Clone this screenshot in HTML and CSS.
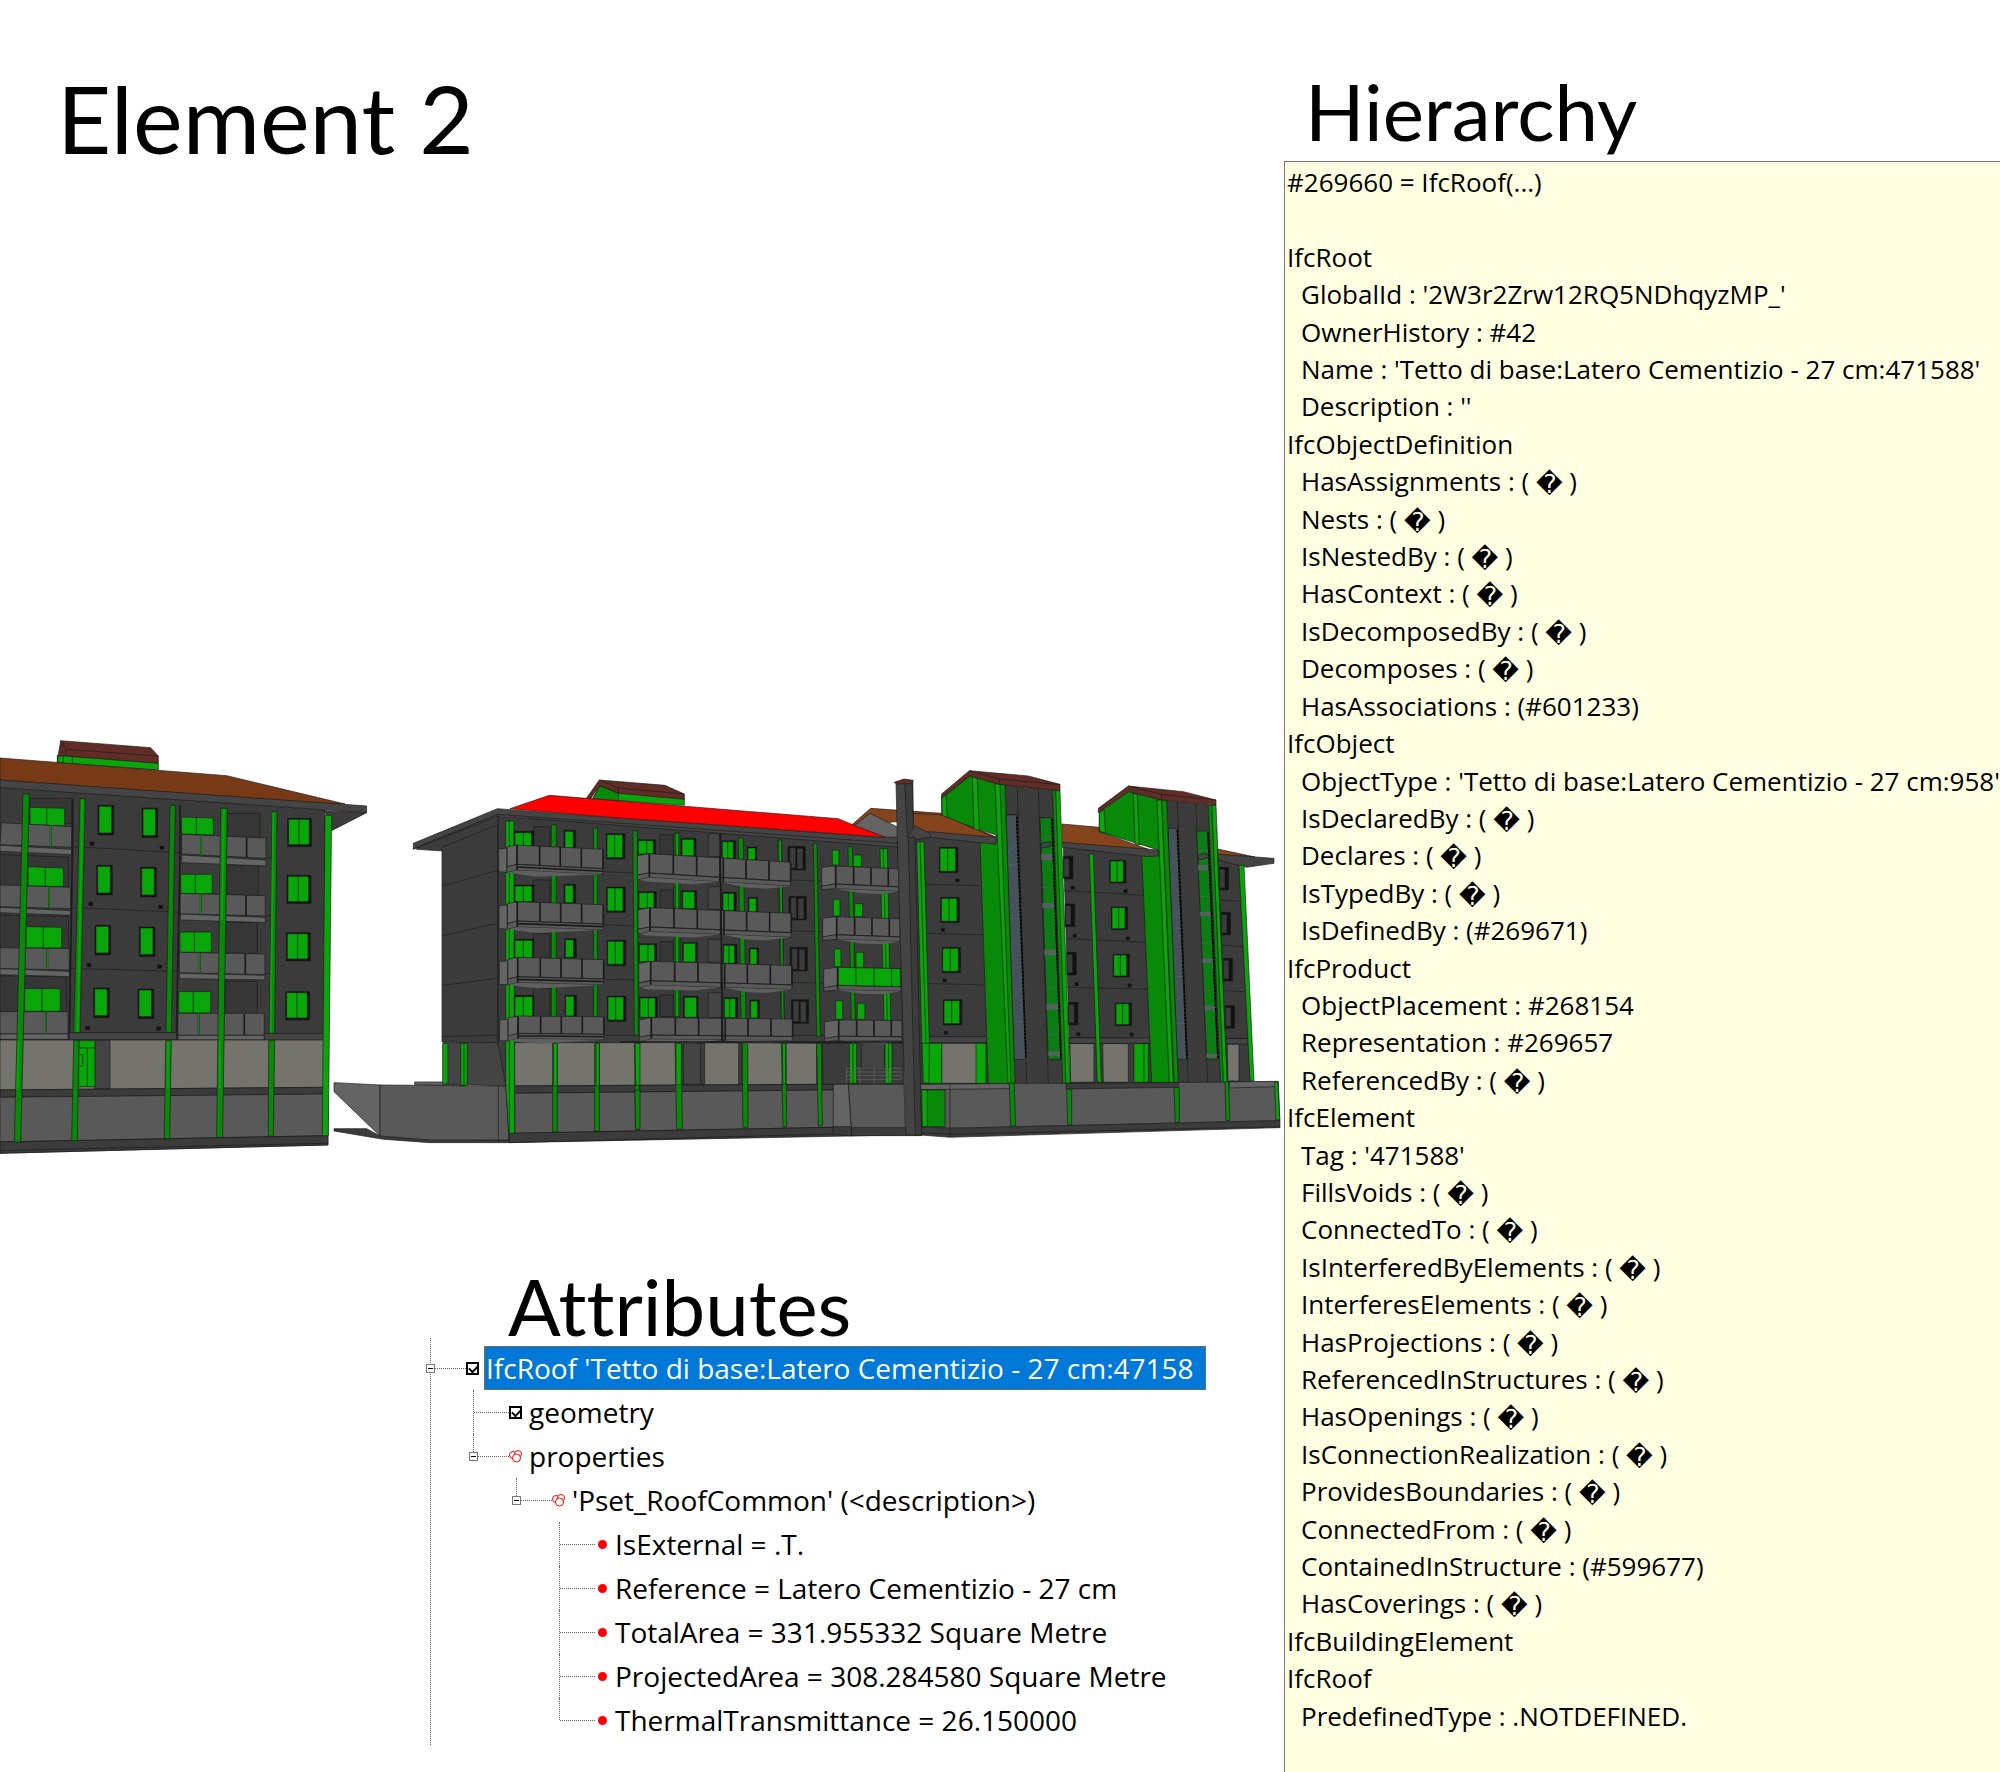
FILE: index.html
```html
<!DOCTYPE html>
<html lang="en">
<head>
<meta charset="utf-8">
<title>Element 2</title>
<link rel="stylesheet" href="styles.css">
</head>
<body>
<div class="page">
<main class="main">
<h1 class="title">Element 2</h1>
<svg class="model" viewBox="0 0 1284 450" role="img" aria-label="Building model with the selected roof in red">
<defs>
<g id="balcony-a"><path class="lite" d="M-55 14l25-3v72h-25zM-30 7L0 0V58l-30 9z"/><path class="mid" d="M0 0H258V58H0zM-30 67L0 58H258V76H0l-30 8z"/><path class="under" d="M0 76H258L60 92-30 84z"/><path class="bar" d="M0 0V76M68 0V58M130 0V58M193 0V58M258 0V58M0 66H258"/></g>
<g id="balcony-b"><path class="lite" d="M-36 8L0 0V58l-36 8z"/><path class="mid" d="M0 0H424V58H0zM-36 66L0 58H424V72H0l-36 9z"/><path class="under" d="M-30 80L0 72H210L130 84H-10zM215 72H424L350 84H290z"/><path class="bar" d="M0 0V70M72 0V58M142 0V58M212-5V72M222 0V72M290 0V58M359 0V58M424 0V58"/></g>
<g id="balcony-c"><path class="lite" d="M-42 6L0 0V54l-42 10z"/><path class="mid" d="M0 0H190V54H0zM-42 62L0 54H190V68H0l-42 5z"/><path class="under" d="M0 68H190L140 78H70z"/><path class="bar" d="M0 0V66M54 0V54M106 0V54M158 0V54"/></g>
<g id="pane"><path class="black" d="M-3-3H69V82H-3z"/><path class="g" d="M0 0H62V76H0zM31 0V76"/></g>
<g id="pane-b"><path class="black" d="M-2-3H54V73H-2z"/><path class="g" d="M0 0H47V69H0zM23 0V69"/></g>
<g id="pane-c"><path class="black" d="M-2-2H47V66H-2z"/><path class="g" d="M0 0H39V63H0zM20 0V63"/></g>
<g id="slit"><path class="black" d="M-3-3H44V86H-3z"/><path class="g" d="M0 0H38V80H0z"/></g>
<g id="blind"><path class="black" d="M-3-3H49V68H-3z"/><path class="wall" d="M2 1H20V63H2zM24 3H42V65H24z"/></g>
<g id="blind-s"><path class="black" d="M0-2H28V66H0z"/><path class="wall" d="M0 4H17V60H0z"/></g>
</defs>

<!-- left building -->
<g transform="scale(.3333)">
<path class="wall" d="M0 200L975 270 984 1275 0 1300z"/>
<path class="wall" d="M975 272L1100 278 995 332z"/>
<path class="g" d="M172 128V106L475 128V150z"/>
<path class="cap" d="M182 62L452 83 475 108V130L197 108 175 128 172 122z"/>
<path class="floor" d="M182 62L197 88 475 108M197 88V108"/>
<path class="g" d="M172 126L175 108 197 108 217 110V134zM190 106V130"/>
<path class="roof" d="M0 114L680 167 1035 252 980 252 0 180z"/>
<path class="eave" d="M0 180L1020 252 1100 258V278L0 203z"/>
<path class="floor" d="M215 380L545 398 820 414M215 563L820 588M210 745L815 762M205 938L984 942"/>
<path class="recess" d="M90 235H216V310H90zM0 403L206 412V500H0zM0 585L206 590V688H0zM0 768L200 770V876H0zM680 280H780V352H680zM680 435H775V526H680zM675 607H772V700H675zM675 784H772V882H675z"/>
<path class="g" d="M90 262L194 265V318L90 314zM84 440L190 444V500L84 498zM78 620L185 622V684H78zM74 806H181V874H74zM140 264V317M136 440V500M130 620V684M126 806V874"/>
<path class="g" d="M545 291L640 294V345L545 342zM542 463H637V521H542zM540 636H634V697H540zM536 815H632V879H536zM589 292V344M586 463V521M583 636V697M580 815V879"/>
<path class="mid" d="M4 308L215 320V382L0 374zM0 495L212 502V566L0 560zM0 683L208 686V750L0 746zM0 875H204V942H0z"/>
<path class="mid" d="M545 343L798 354V415L545 402zM541 520L796 527V588L541 582zM538 697L795 702V764L538 758zM534 880H793V946H534z"/>
<path class="lite" d="M0 376L215 388V404L0 394zM0 562L212 572V586L0 578zM0 746L208 754V770L0 764zM0 942H204V958H0zM545 405L798 420V438L545 428zM541 582L796 592V608L541 600zM538 760L795 766V780L538 776zM534 946H793V960H534z"/>
<path class="bar" d="M152 318V382M147 500V565M142 686V750M138 876V942M604 345V406M602 523V583M599 698V760M596 880V944M740 352V413M738 526V587M736 702V763M733 882V946M218 236V340L208 958M540 256V400L529 958"/>
<path class="gl" d="M152 318V382M147 500V565M142 686V750M138 876V942M604 345V406M602 523V583M599 698V760M596 880V944"/>
<use href="#slit" x="297" y="259"/><use href="#slit" x="293" y="439"/><use href="#slit" x="288" y="619"/><use href="#slit" x="284" y="807"/>
<use href="#slit" x="429" y="267"/><use href="#slit" x="425" y="445"/><use href="#slit" x="421" y="624"/><use href="#slit" x="417" y="810"/>
<use href="#pane" x="866" y="298"/><use href="#pane" x="864" y="469"/><use href="#pane" x="862" y="641"/><use href="#pane" x="860" y="818"/>
<path class="black" d="M270 366h12v10h-12zM266 547h12v10h-12zM261 730h12v10h-12zM257 919h12v10h-12zM480 378h12v10h-12zM476 556h12v10h-12zM473 735h12v10h-12zM470 921h12v10h-12z"/>
<path class="eave" d="M208 938H530V960H208zM793 940H984V962H793z"/>
<path class="garage" d="M0 960H984V1102L0 1110z"/>
<path class="eave" d="M284 962H330V1106H284z"/>
<path class="g" d="M236 962H285V1100H236zM262 984V1100M236 984H285M238 1004h10v34h-10"/>
<path class="wall" d="M0 1110L972 1102V1124L0 1132z"/>
<path class="mid" d="M0 1132L984 1122V1247L0 1266z"/>
<path class="wall" d="M0 1266L984 1247V1275L0 1300zM0 1292L984 1270"/>
<path class="gd" d="M69 222H88L62 1266H43zM240 236H256L240 938H221zM221 962H237L232 1262H215zM510 256H526L514 938H498zM497 962H514L509 1256H493zM662 265H682L668 1252H650zM817 275H831L824 940H808zM806 962H824L820 1248H805z"/>
<path class="gl2" d="M247 238L233 936M820 278L812 938M505 964L503 1104M672 268L666 600M660 964V1104M56 964L52 1108"/>
<path class="g" d="M975 286H995L985 1247H967z"/>
</g>

<!-- ramp and left wing -->
<g transform="translate(320 30) scale(.3333)">
<path class="wall" d="M42 1136H140L180 1158 330 1168 568 1170V1178H330L190 1168 42 1143z"/>
<path class="lite" d="M42 998L180 1005V1158L42 1025z"/>
<path class="mid" d="M180 1005L558 1008 568 1170H330L180 1158zM535 1008V1176"/>
<path class="lite" d="M284 996H370L430 1008 284 1004z"/>
<path class="wall" d="M290 290L532 190 560 240 370 303 290 298z"/>
<path class="wall" d="M366 292L540 222V880L366 876z"/>
<path class="eave" d="M370 878H558V1008L370 1002z"/>
<path class="g" d="M368 880H384V1000L368 1004zM422 880H442V1006H422zM432 880V1006"/>
<path class="wall" d="M534 200L1750 270V1155L568 1178 558 1008 534 880z"/>
<path class="floor" d="M368 408L555 355M368 557L555 515M368 706L555 682M366 860L535 855M534 225V875M850 365L1740 404M850 525L1740 552M850 688L1740 703M534 856H1745"/>
<path class="recess" d="M640 230H690V290H640zM640 390H690V460H640zM640 550H690V625H640zM640 715H690V800H640zM1020 255H1060V320H1020zM1020 420H1060V480H1020zM1020 575H1060V640H1020zM1020 735H1060V800H1020z"/>
<path class="garage" d="M584 878H1060L1490 880V1003L584 1008z"/>
<path class="wall" d="M580 1008L1540 1003V1020L580 1030z"/>
<path class="mid" d="M584 1030L1545 1020V1132L584 1150z"/>
<path class="wall" d="M568 1150L1545 1132V1152L568 1178z"/>
<path class="gd" d="M694 225H709V800H694zM820 234H833V800H820zM698 880H712L712 1146H698zM824 880H838V1143H824zM939 242H952L955 856H943zM944 880H958V1140H946z"/>
<path class="g" d="M557 213H582L584 1150H566L557 1000zM568 213V1150M700 880H712V1008H700zM828 880H838V1008H828zM946 880H958V1006H946z"/>
<path class="black" d="M583 244H642V290H583zM583 405H642V455H583zM583 568H642V625H583zM583 736H642V800H583zM732 241H767V294H732zM732 403H767V458H732zM734 566H769V622H734zM735 736H770V798H735z"/>
<path class="g" d="M585 248H635V290H585zM585 408H636V455H585zM585 571H637V625H585zM585 740H638V800H585zM610 248V290M610 408V455M610 571V625M610 740V800M735 244H760V294H735zM735 406H760V458H735zM736 569H761V622H736zM737 739H762V798H737z"/>
<use href="#pane-b" x="861" y="254"/><use href="#pane-b" x="862" y="414"/><use href="#pane-b" x="863" y="574"/><use href="#pane-b" x="864" y="741"/>
<use href="#balcony-a" transform="matrix(1 .05 0 1 591 285)"/><use href="#balcony-a" transform="matrix(1 .035 0 1 592 455)"/><use href="#balcony-a" transform="matrix(1 .027 0 1 593 622)"/><use href="#balcony-a" transform="matrix(1 .01 0 .9 594 798)"/>
</g>

<!-- centre of the right building -->
<g transform="translate(620 30) scale(.3333)">
<path class="gd" d="M162 250H180V800H162zM355 264H370L378 810H363zM473 270H485L493 810H483zM580 280H591L601 860H590zM590 880H604L607 1128H595zM165 880H184L187 1138H170zM366 880H383L384 1132H369zM484 880H498L500 1130H489zM45 1020H60V1138H47zM684 290H697L706 810H694z"/>
<path class="g" d="M45 880H60V1006H47zM167 250H176V800H167zM476 270H484L492 810H486zM780 296H802L812 812H792zM168 880H184V1004H168zM487 880H497V1003H489z"/>
<path class="wall" d="M188 880H254V1003H188zM356 880H366V1003H356zM606 880H850V1003H610z"/>
<path class="eave" d="M265 252L304 248V320H265zM265 410H304V478H265zM265 568H304V636H265zM265 728H304V803H265zM190 880H242V1003H190zM724 880H794V955H724z"/>
<path class="black" d="M53 269H107V312H53zM55 425H109V475H55zM56 581H110V635H56zM58 741H112V802H58zM184 265H228V318H184zM186 422H230V476H186zM188 578H232V636H188zM190 739H234V802H190zM306 272H347V325H306zM308 427H349V482H308zM310 583H351V640H310zM312 743H353V803H312zM382 291H410V330H382zM385 442H413V486H385zM388 594H416V644H388zM390 750H418V804H390z"/>
<path class="g" d="M55 272H100V312H55zM57 428H102V475H57zM58 584H104V635H58zM60 744H106V802H60zM186 268H222V318H186zM188 425H224V476H188zM190 580H227V636H190zM193 742H230V802H193zM307 275H340V325H307zM309 430H342V482H309zM311 586H344V640H311zM313 746H347V803H313zM384 294H406V330H384zM387 445H409V486H387zM390 597H411V644H390zM392 753H413V804H392zM80 272V312M82 428V475M84 584V635M85 744V802M323 275V325M325 430V482M327 586V640M329 746V803"/>
<path class="g" d="M637 300H657V345H637zM640 448H660V498H640zM643 597H663V650H643zM647 752H668V808H647zM700 315H724V350H700zM704 461H728V500H704zM708 607H731V652H708zM712 760H735V808H712zM688 880H710V1000H688zM795 880H816V1000H795zM699 880V1000M806 880V1000M790 296L802 812"/>
<use href="#blind" x="507" y="292"/><use href="#blind" x="510" y="442"/><use href="#blind" x="513" y="595"/><use href="#blind" x="517" y="752"/>
<use href="#balcony-b" transform="matrix(1 .06 0 1 88 311)"/><use href="#balcony-b" transform="matrix(1 .04 0 1 90 473)"/><use href="#balcony-b" transform="matrix(1 .03 0 1 92 634)"/><use href="#balcony-b" transform="matrix(1 .01 0 .9 94 803)"/>
<use href="#balcony-c" transform="matrix(1 .045 0 1 647 348)"/><use href="#balcony-c" transform="matrix(1 .035 0 1 650 500)"/><use href="#balcony-c" transform="matrix(1 .02 0 1 653 652)"/><use href="#balcony-c" transform="matrix(1 .01 0 .9 656 810)"/>
<path class="g" d="M655 652L841 656V710L655 706zM708 653V707M762 654V708M815 655V709"/>
<path class="bar" d="M300 248L308 876M0 876H850"/>
<path class="rail" d="M680 955H845M680 966H845M680 977H845M680 988H845M680 952V1000M720 955V1000M762 955V1000M805 955V1000"/>
<path class="mid" d="M685 1003H852L857 1155 695 1157z"/><path class="lite" d="M640 1003H685L695 1157 640 1150z"/>
<path class="wall" d="M640 1130H695V1158L640 1152zM695 1133H905V1157H695z"/>
<path class="g" d="M-82 146L-60 106-5 128 193 146V166L0 152z"/>
<path class="gd" d="M-82 146L-60 108-5 130V152z"/>
<path class="cap" d="M-102 146L-62 90 135 106 193 132V148L-5 130-60 106-88 146z"/>
<path class="floor" d="M-62 90L-5 114 193 132M-5 114V130"/>
<path class="roof2" d="M695 225L752 175 965 190 1130 262 930 256 880 256 830 215z"/>
<path class="lite" d="M703 228L750 190 850 240V262H790z"/>
<path class="eave" d="M-620 280L-368 176-20 203 200 218 790 262 930 262 840 292-368 198-620 298z"/>
<path class="floor" d="M-620 296L-368 193 835 280"/>
<path class="red" d="M-330 176L-212 136 655 206 700 225 797 262 240 221-20 203z"/>
</g>

<!-- towers on the right -->
<g transform="translate(940 30) scale(.3333)">
<path class="wall" d="M-80 250L130 270 150 1005H-60z"/>
<path class="garage" d="M5 880H110V1000H5z"/>
<path class="floor" d="M-60 403L122 407M-60 550L128 554M-60 700L132 705"/>
<path class="eave" d="M-60 860H142V878H-60z"/>
<path class="gd" d="M5 140L90 78 178 103 210 1000H145L120 275 168 275V255L20 205H5z"/>
<path class="g" d="M5 140L18 132 22 207 7 203zM97 80L112 85 118 245 102 240zM108 880H138V1000H108z"/>
<path class="roof2" d="M0 194L30 205 168 264-30 250-100 240-100 190z"/>
<path class="eave" d="M-98 264L-30 245 168 262V283L-30 262-98 274z"/>
<use href="#pane-b" x="0" y="295"/><use href="#pane-b" x="4" y="445"/><use href="#pane-b" x="8" y="595"/><use href="#pane-b" x="12" y="752"/>
<path class="black" d="M47 387h10v9h-10zM4 535h10v9h-10zM9 687h10v9h-10zM13 844h10v9h-10z"/>
<path class="wall" d="M195 105L338 120 370 1000H225zM232 112L260 1000M295 116L325 1000M195 192L230 195M298 202L337 205"/>
<path class="glass" d="M198 195H230L257 928H222z"/>
<path class="gs" d="M300 203H335L362 928H325z"/>
<path class="band" d="M304 312H338V330H304zM308 460H343V474H308zM314 600H349V614H314zM320 763H355V778H320zM325 905H360V917H325zM303 266L333 262M306 412H338M312 552H345M318 714H350M322 853H356"/>
<path class="glassline" d="M202 310L228 280M206 480L232 450M212 590L240 560M216 745L244 715M204 345H236M210 505H240M214 650H245M220 815H250"/>
<path class="eave" d="M303 280L332 275V290L304 294z"/>
<path class="dash" d="M230 200L258 925M336 206L363 925"/>
<path class="g" d="M165 102H182L215 1000H204zM345 122H360L390 1000H375z"/>
<path class="gd" d="M180 102H195L225 1005H213zM338 120H347L378 1000H368z"/>
<path class="cap" d="M5 132L88 62 265 78 360 103V122L178 103 90 78 5 145z"/>
<path class="floor" d="M88 62L178 87 360 104M178 87V103"/>
<path class="roof2" d="M366 222L478 232V245L625 298 368 280z"/>
<path class="wall" d="M370 285L612 312 635 1000H392z"/>
<path class="floor" d="M372 422L612 436M378 566L617 577M384 712L624 718M388 862L630 866"/>
<path class="garage" d="M390 881H462V997H392zM488 881H565V997H490z"/>
<use href="#pane-c" x="511" y="333"/><use href="#pane-c" x="516" y="473"/><use href="#pane-c" x="521" y="615"/><use href="#pane-c" x="528" y="761"/>
<use href="#blind-s" x="371" y="321"/><use href="#blind-s" x="376" y="464"/><use href="#blind-s" x="381" y="609"/><use href="#blind-s" x="386" y="759"/>
<path class="black" d="M393 409h10v9h-10zM399 553h10v9h-10zM405 698h10v9h-10zM410 848h10v9h-10zM552 419h10v9h-10zM558 561h10v9h-10zM564 702h10v9h-10zM570 849h10v9h-10z"/>
<path class="gd" d="M478 188L566 125 665 150 702 998H635L605 310 655 310V300L478 245z"/>
<path class="g" d="M478 188L492 178 497 250 478 243zM580 130L592 133 598 285 585 282zM582 881H625V997H582zM612 881V997"/>
<path class="eave" d="M368 277L655 300V318L620 320 368 292zM388 864H630V880H388z"/>
<path class="g" d="M448 312H460L470 600 484 997H472z"/>
<path class="wall" d="M680 152L805 165 845 998H715zM712 158L745 998M767 162L803 998"/>
<path class="glass" d="M684 235H712L740 928H712z"/>
<path class="gs" d="M770 243H803L833 928H800z"/>
<path class="band" d="M775 346H804V360H775zM781 486H812V498H781zM788 626H819V638H788zM795 768H826V780H795zM800 912H832V922H800zM775 303L802 299M780 440H806M786 580H814M792 721H820M797 864H826"/>
<path class="glassline" d="M688 350L712 325M692 510L718 480M698 640L724 610M704 760L730 730M690 390H716M696 535H722M702 680H728M708 820H734"/>
<path class="eave" d="M774 314L801 310V325L775 329z"/>
<path class="dash" d="M712 240L741 925M804 246L834 925"/>
<path class="g" d="M651 150H665L700 998H688zM815 166H828L862 998H850z"/>
<path class="gd" d="M665 150H680L715 998H703zM805 165H815L850 998H842z"/>
<path class="cap" d="M475 175L565 108 730 125 828 150V166L665 150 566 125 475 188z"/>
<path class="floor" d="M565 108L665 133 828 150M665 133V150"/>
<path class="wall" d="M833 325L900 338 932 995H862z"/>
<path class="floor" d="M840 450L910 455M846 586L916 590M852 722L924 726M858 865L928 866"/>
<path class="roof2" d="M833 297L945 321 833 313z"/>
<path class="eave" d="M833 313L1002 325V340L920 352 835 330zM858 866H930V882H858z"/>
<path class="garage" d="M862 883H897V993H864z"/>
<path class="g" d="M897 346H912L942 993H930z"/>
<use href="#blind-s" x="838" y="354"/><use href="#blind-s" x="844" y="489"/><use href="#blind-s" x="850" y="627"/><use href="#blind-s" x="856" y="769"/>
<path class="mid" d="M-65 1005L30 1003 1015 995 1020 1112 30 1135-60 1130z"/>
<path class="lite" d="M-60 1003L208 1001V1016L-60 1019zM868 996L1015 994V1010L868 1014z"/>
<path class="wall" d="M378 1000L715 997V1012L378 1017z"/>
<path class="wall" d="M-60 1130L30 1135 1020 1112V1133L30 1162-60 1155z"/>
<path class="floor" d="M-60 1148L30 1153 1020 1130"/>
<path class="gd" d="M208 1000H222L227 1128H212zM380 1018H395V1125H383zM702 1013H718V1117H706zM855 995H866L870 1112H858z"/>
<path class="g" d="M1004 996H1014L1019 1110H1008z"/>
<path class="gd" d="M-58 1020H15V1130H-55z"/><path class="floor" d="M30 1005V1160"/>
<path class="g" d="M-55 880H5V1000H-53zM-70 275H-48L-32 880-33 1000H-50L-55 860zM-60 275L-42 880M-55 1020H-38V1130H-53z"/>
</g>

<!-- chimney -->
<g transform="translate(620 30) scale(.3333)">
<path class="eave" d="M828 95H878L880 225 930 250V262L865 272 905 1155H858L850 880 832 262z"/>
<path class="wall" d="M854 95H878L880 235 862 262zM865 262H885L905 1155H886z"/>
<path class="cap" d="M823 97L852 87 880 91 876 101 830 102z"/>
</g>
</svg>

<section class="attributes">
<h2 class="heading heading-attributes">Attributes</h2>
<ul class="tree">
<li>
<div class="row"><button class="toggle" type="button" aria-label="Collapse IfcRoof"></button><span class="link"></span><input class="check" type="checkbox" id="roof" checked><label class="label selected" for="roof">IfcRoof 'Tetto di base:Latero Cementizio - 27 cm:47158</label></div>
<ul>
<li><div class="row leaf"><span class="link"></span><input class="check" type="checkbox" id="geometry" checked><label class="label" for="geometry">geometry</label></div></li>
<li>
<div class="row"><button class="toggle" type="button" aria-label="Collapse properties"></button><span class="link"></span><svg class="rings" viewBox="0 0 13 13"><circle cx="4" cy="5" r="3.5"/><circle cx="9" cy="4" r="3.5"/><circle cx="7.500" cy="8" r="4"/></svg><span class="label">properties</span></div>
<ul>
<li>
<div class="row"><button class="toggle" type="button" aria-label="Collapse Pset_RoofCommon"></button><span class="link"></span><svg class="rings" viewBox="0 0 13 13"><circle cx="4" cy="5" r="3.5"/><circle cx="9" cy="4" r="3.5"/><circle cx="7.500" cy="8" r="4"/></svg><span class="label">'Pset_RoofCommon' (&lt;description&gt;)</span></div>
<ul>
<li><div class="row leaf"><span class="link"></span><span class="dot"></span><span class="label">IsExternal = .T.</span></div></li>
<li><div class="row leaf"><span class="link"></span><span class="dot"></span><span class="label">Reference = Latero Cementizio - 27 cm</span></div></li>
<li><div class="row leaf"><span class="link"></span><span class="dot"></span><span class="label">TotalArea = 331.955332 Square Metre</span></div></li>
<li><div class="row leaf"><span class="link"></span><span class="dot"></span><span class="label">ProjectedArea = 308.284580 Square Metre</span></div></li>
<li><div class="row leaf"><span class="link"></span><span class="dot"></span><span class="label">ThermalTransmittance = 26.150000</span></div></li>
</ul>
</li>
</ul>
</li>
</ul>
</li>
</ul>
</section>
</main>

<aside class="side">
<h2 class="heading heading-hierarchy">Hierarchy</h2>
<div class="panel">
<p class="line">#269660 = IfcRoof(...)</p>
<p class="line"></p>
<p class="line">IfcRoot</p>
<p class="line sub">GlobalId : '2W3r2Zrw12RQ5NDhqyzMP_'</p>
<p class="line sub">OwnerHistory : #42</p>
<p class="line sub">Name : 'Tetto di base:Latero Cementizio - 27 cm:471588'</p>
<p class="line sub">Description : ''</p>
<p class="line">IfcObjectDefinition</p>
<p class="line sub">HasAssignments : ( <span class="unknown">�</span> )</p>
<p class="line sub">Nests : ( <span class="unknown">�</span> )</p>
<p class="line sub">IsNestedBy : ( <span class="unknown">�</span> )</p>
<p class="line sub">HasContext : ( <span class="unknown">�</span> )</p>
<p class="line sub">IsDecomposedBy : ( <span class="unknown">�</span> )</p>
<p class="line sub">Decomposes : ( <span class="unknown">�</span> )</p>
<p class="line sub">HasAssociations : (#601233)</p>
<p class="line">IfcObject</p>
<p class="line sub">ObjectType : 'Tetto di base:Latero Cementizio - 27 cm:958'</p>
<p class="line sub">IsDeclaredBy : ( <span class="unknown">�</span> )</p>
<p class="line sub">Declares : ( <span class="unknown">�</span> )</p>
<p class="line sub">IsTypedBy : ( <span class="unknown">�</span> )</p>
<p class="line sub">IsDefinedBy : (#269671)</p>
<p class="line">IfcProduct</p>
<p class="line sub">ObjectPlacement : #268154</p>
<p class="line sub">Representation : #269657</p>
<p class="line sub">ReferencedBy : ( <span class="unknown">�</span> )</p>
<p class="line">IfcElement</p>
<p class="line sub">Tag : '471588'</p>
<p class="line sub">FillsVoids : ( <span class="unknown">�</span> )</p>
<p class="line sub">ConnectedTo : ( <span class="unknown">�</span> )</p>
<p class="line sub">IsInterferedByElements : ( <span class="unknown">�</span> )</p>
<p class="line sub">InterferesElements : ( <span class="unknown">�</span> )</p>
<p class="line sub">HasProjections : ( <span class="unknown">�</span> )</p>
<p class="line sub">ReferencedInStructures : ( <span class="unknown">�</span> )</p>
<p class="line sub">HasOpenings : ( <span class="unknown">�</span> )</p>
<p class="line sub">IsConnectionRealization : ( <span class="unknown">�</span> )</p>
<p class="line sub">ProvidesBoundaries : ( <span class="unknown">�</span> )</p>
<p class="line sub">ConnectedFrom : ( <span class="unknown">�</span> )</p>
<p class="line sub">ContainedInStructure : (#599677)</p>
<p class="line sub">HasCoverings : ( <span class="unknown">�</span> )</p>
<p class="line">IfcBuildingElement</p>
<p class="line">IfcRoof</p>
<p class="line sub">PredefinedType : .NOTDEFINED.</p>
</div>
</aside>
</div>
</body>
</html>
```
FILE: styles.css
```css
* { box-sizing: border-box; }
body { margin: 0; background: #fff; color: #000; font-family: "Open Sans", "Noto Sans", sans-serif; }
h1, h2, p, ul { margin: 0; padding: 0; }
ul { list-style: none; }

.page { display: grid; grid-template-columns: minmax(0, 1284fr) minmax(0, 716fr); min-height: 100vh; }
.main, .side { display: flex; flex-direction: column; }

.title, .heading { font-family: Lato, "Open Sans", sans-serif; font-weight: 400; font-variant-ligatures: none; }
.title { padding: 62px 0 0 57px; font-size: 94px; line-height: 112px; }
.heading { font-size: 78px; }
.heading-attributes { padding-left: 82px; line-height: 80px; }
.heading-hierarchy { padding: 64px 0 3px 21px; line-height: 94px; }

/* building model */
.model { display: block; width: 100%; height: auto; margin: 546px 0 96px; }
.model path { stroke: #1b1b1b; stroke-width: 2; }
.model .wall { fill: #3b3b3b; }
.model .eave { fill: #444; }
.model .recess { fill: #363636; }
.model .mid { fill: #595959; }
.model .lite { fill: #646464; }
.model .under { fill: #5f5f5f; stroke: none; }
.model .garage { fill: #74746c; }
.model .g { fill: #09a609; }
.model .gd { fill: #088a08; }
.model .gs { fill: #0b7d14; }
.model .roof { fill: #783917; }
.model .roof2 { fill: #86441d; }
.model .cap { fill: #602c25; }
.model .red { fill: #f00; }
.model .glass { fill: #46525a; }
.model .black { fill: #111; }
.model .floor, .model .bar, .model .rail, .model .dash, .model .glassline, .model .gl, .model .gl2 { fill: none; }
.model .bar { stroke-width: 5; }
.model .rail { stroke: #666; }
.model .dash { stroke: #000; stroke-width: 5; stroke-dasharray: 8 3; }
.model .band { fill: #55615f; stroke: #55615f; }
.model .glassline { stroke: #56636c; }
.model .gl { stroke: #088a08; stroke-width: 4; }
.model .gl2 { stroke: #09a609; stroke-width: 6; }

/* attribute tree */
.attributes { padding-left: 426px; }
.tree { position: relative; width: 780px; max-width: 100%; font-size: 28px; line-height: 44px; }
.tree::before { content: ""; position: absolute; left: 4px; top: -8px; bottom: -3px; border-left: 1px dotted #666; }
.tree ul { margin-left: 43px; }
.tree ul > li { position: relative; }
.tree ul > li::before { content: ""; position: absolute; left: 4px; top: 0; bottom: 0; border-left: 1px dotted #666; }
.tree ul > li:last-child::before { bottom: auto; height: 22px; }
.row { position: relative; display: flex; align-items: center; height: 44px; white-space: nowrap; }
.leaf { padding-left: 5px; }
.toggle { flex: none; width: 9px; height: 9px; padding: 0; border: 1px solid #777; background: linear-gradient(#000, #000) center / 5px 1px no-repeat #fff; }
.link { flex: none; width: 31px; border-top: 1px dotted #666; }
.leaf .link { width: 35px; }
.check { flex: none; appearance: none; width: 13px; height: 13px; margin: 0; border: 2px solid #000; background: #fff; position: relative; }
.check::after { content: ""; position: absolute; left: 1px; top: 1px; width: 7px; height: 4px; border: solid #000; border-width: 0 0 2px 2px; transform: rotate(-45deg); }
.rings { flex: none; width: 13px; height: 13px; fill: #fff; stroke: #f00; stroke-width: 1; }
.dot { flex: none; width: 9px; height: 9px; margin: 0 1px 0 3px; border-radius: 50%; background: #f00; }
.label { margin-left: 5px; padding-left: 2px; }
.selected { flex: 1; overflow: hidden; background: #0078d7; color: #fff; outline: 1px dotted #c60; outline-offset: -1px; }

/* hierarchy panel */
.panel { flex: 1; display: flex; flex-direction: column; overflow: hidden; padding: 2px 0 37px 2px; border: solid #777; border-width: 1px 0 0 1px; background: #ffffe1; font-size: 26px; line-height: 36px; }
.line { flex: 1 1 36px; white-space: nowrap; }
.sub { padding-left: 14px; }
.unknown { font-family: "DejaVu Sans", sans-serif; line-height: 1; vertical-align: -2px; }
```
